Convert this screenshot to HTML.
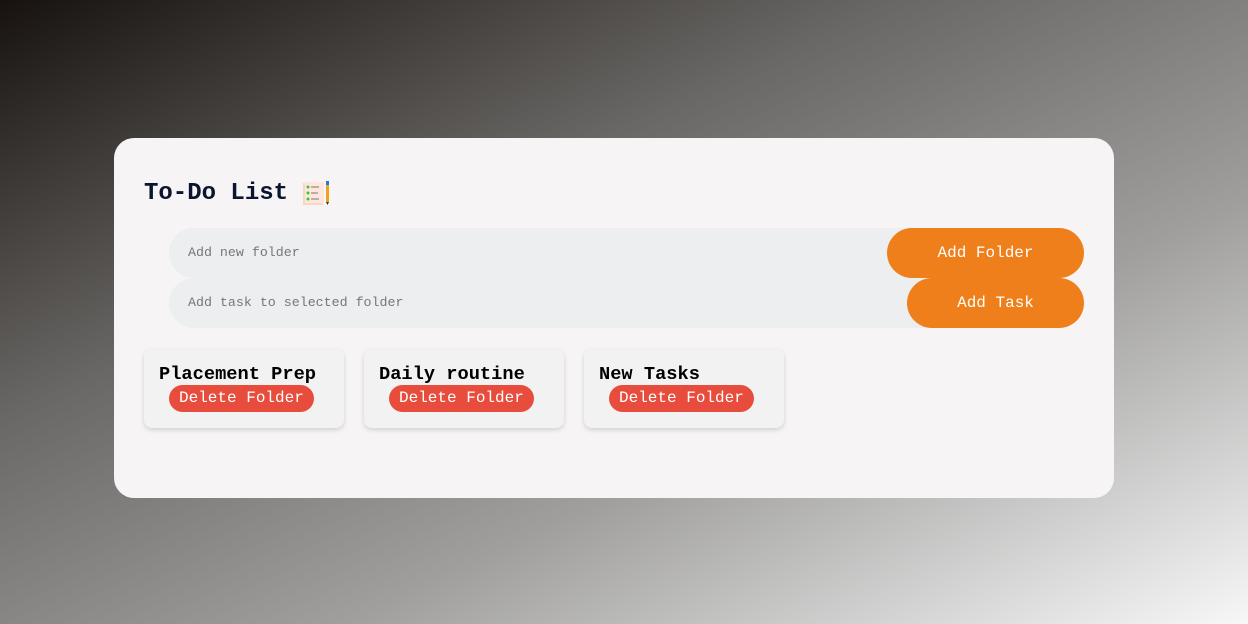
<!DOCTYPE html>
<html><head><style>
*{margin:0;padding:0;box-sizing:border-box}
body{width:1248px;height:624px;overflow:hidden;background:linear-gradient(155deg,#17120f 0%,#6a6866 35%,#a09f9e 65%,#f7f7f7 100%);font-family:"Liberation Mono",monospace;position:relative}
.box{position:absolute;left:114px;top:138px;width:1000px;height:360px;background:#f6f4f4;border-radius:20px}
h1{position:absolute;left:30px;top:42px;font-size:24px;font-weight:bold;color:#0b1530;display:flex;align-items:center}
.row{position:absolute;left:55px;width:915px;height:50px;background:#eceeef;border-radius:25px}
.row span{position:absolute;left:19px;top:17px;font-size:13.3px;color:#777}
.btn{position:absolute;right:0;top:0;height:50px;background:#ef7f1a;border-radius:25px;color:#fff;font-family:"Liberation Mono",monospace;font-size:16px;line-height:50px;text-align:center}
.card{position:absolute;top:211px;width:200px;height:79px;background:#f2f2f2;border-radius:8px;box-shadow:0 2px 5px rgba(0,0,0,.15)}
.card b{position:absolute;left:15px;top:14px;font-size:18.7px;color:#000}
.card i{position:absolute;left:25px;top:36px;height:27px;padding:0 10px;background:#e74c3c;border-radius:14px;color:#fff;font-style:normal;font-size:16px;line-height:27px}
</style></head><body>
<div class="box">
<h1>To-Do List&nbsp;<svg width="30" height="26" viewBox="0 0 30 26"><rect x="1" y="2" width="20" height="22" fill="#fcd6c4"/><rect x="3" y="1" width="19" height="21" fill="#fde7dc"/><circle cx="6" cy="6" r="1.5" fill="#3c3"/><circle cx="6" cy="12" r="1.5" fill="#3c3"/><circle cx="6" cy="18" r="1.5" fill="#3c3"/><path d="M9 6h8M9 12h7M9 18h8" stroke="#988" stroke-width="1.2"/><rect x="24" y="0" width="3" height="4" fill="#1a7be0"/><rect x="24" y="4" width="3" height="17" fill="#f0a020"/><path d="M24 21h3l-1.5 3z" fill="#333"/></svg></h1>
<div class="row" style="top:90px"><span>Add new folder</span><div class="btn" style="width:197px">Add Folder</div></div>
<div class="row" style="top:140px"><span>Add task to selected folder</span><div class="btn" style="width:177px">Add Task</div></div>
<div class="card" style="left:30px"><b>Placement Prep</b><i>Delete Folder</i></div>
<div class="card" style="left:250px"><b>Daily routine</b><i>Delete Folder</i></div>
<div class="card" style="left:470px"><b>New Tasks</b><i>Delete Folder</i></div>
</div>
</body></html>
